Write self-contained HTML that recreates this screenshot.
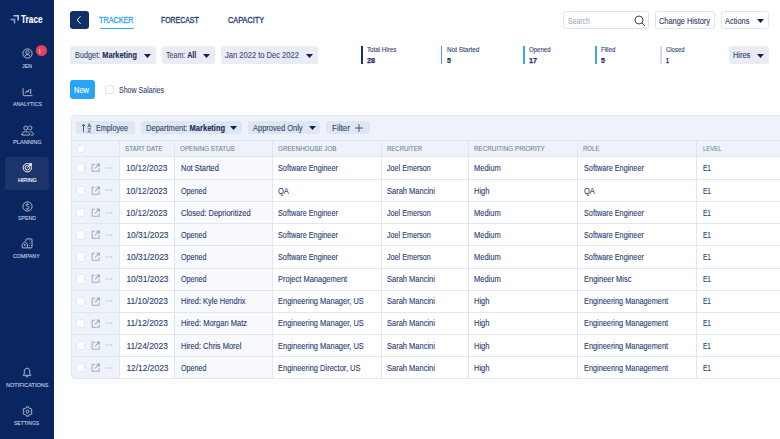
<!DOCTYPE html><html><head><meta charset="utf-8"><style>*{box-sizing:border-box;margin:0;padding:0}
html,body{width:780px;height:439px;overflow:hidden;background:#fff}
body{position:relative;font-family:"Liberation Sans",sans-serif}
.a{position:absolute}
.t{position:absolute;white-space:nowrap;line-height:1;transform-origin:0 0;-webkit-text-stroke-width:0.12px}
</style></head><body>
<div class="a" style="left:0;top:0;width:54px;height:439px;background:#0a2660"></div>
<svg class="a" style="left:10px;top:14.5px" width="9" height="9" viewBox="0 0 9 9"><path d="M3.5 0.8H8.2V5.5" fill="none" stroke="#b9c2d6" stroke-width="1.6"/><path d="M0.5 4.5H4.5V8.5" fill="none" stroke="#8f9bb6" stroke-width="1.6"/></svg>
<div class="a" style="left:5px;top:157px;width:44px;height:33px;background:rgba(255,255,255,0.07);border-radius:3px"></div>
<div class="a" style="left:0;width:54px;display:flex;justify-content:center;top:48.2px"><svg width="11" height="11" viewBox="0 0 11 11" fill="none" stroke="#c3cbe0" stroke-width="0.9"><circle cx="5.5" cy="5.5" r="4.6"/><circle cx="5.5" cy="4.4" r="1.7"/><path d="M2.6 8.6C3.3 7.2 4.3 6.7 5.5 6.7S7.7 7.2 8.4 8.6"/></svg></div>
<div class="a" style="left:0;width:54px;display:flex;justify-content:center;top:86.0px"><svg width="11" height="11" viewBox="0 0 11 11" fill="none" stroke="#c3cbe0" stroke-width="0.9" stroke-linecap="round" stroke-linejoin="round"><path d="M1.1 2.6V8.6Q1.1 9.7 2.2 9.7H10"/><path d="M3.6 7L4.8 4.8L5.9 6.1L7.1 3.6"/><path d="M8.7 3.5V7.7"/></svg></div>
<div class="a" style="left:0;width:54px;display:flex;justify-content:center;top:124.5px"><svg width="13" height="11" viewBox="0 0 13 11" fill="none" stroke="#c3cbe0" stroke-width="0.85" stroke-linecap="round" stroke-linejoin="round"><circle cx="4.8" cy="3" r="2"/><path d="M7.9 1.3A2 2 0 1 1 7.9 4.7"/><path d="M0.9 9.6C0.9 7.6 2.4 6.7 4.8 6.7S8.6 7.6 8.6 9.6Q8.6 10.1 8.1 10.1H1.4Q0.9 10.1 0.9 9.6Z"/><path d="M9.8 6.8C11.5 7 12.4 7.9 12.4 9.5Q12.4 10.1 11.8 10.1H10.2"/></svg></div>
<div class="a" style="left:0;width:54px;display:flex;justify-content:center;top:162.4px"><svg width="11" height="11" viewBox="0 0 11 11" fill="none" stroke="#ffffff" stroke-width="1"><circle cx="5.3" cy="5.7" r="4.2"/><circle cx="5.3" cy="5.7" r="2.2"/><path d="M5.3 5.7L9.3 1.7M7.5 1.6H9.4V3.5"/></svg></div>
<div class="a" style="left:0;width:54px;display:flex;justify-content:center;top:200.5px"><svg width="11" height="11" viewBox="0 0 11 11" fill="none" stroke="#c3cbe0" stroke-width="0.9"><circle cx="5.5" cy="5.5" r="4.6"/><path d="M6.8 3.8C6.5 3.3 6 3.1 5.4 3.1C4.6 3.1 4.1 3.6 4.1 4.2C4.1 5.6 7 4.9 7 6.6C7 7.3 6.4 7.9 5.5 7.9C4.8 7.9 4.3 7.6 4 7.1M5.5 2.3V3.1M5.5 7.9V8.7"/></svg></div>
<div class="a" style="left:0;width:54px;display:flex;justify-content:center;top:238.3px"><svg width="12" height="11" viewBox="0 0 12 11" fill="none" stroke="#c3cbe0" stroke-width="0.9"><path d="M1.2 9.3V6.3L3.8 3.6L6.4 6.3V9.3Q6.4 9.9 5.8 9.9H1.8Q1.2 9.9 1.2 9.3Z"/><path d="M5 3.2V1.8Q5 0.9 5.9 0.9H10.1Q11 0.9 11 1.8V9Q11 9.9 10.1 9.9H6.4"/><path d="M8.8 2.6V3.4M8.8 4.9V5.7M8.8 7.2V8"/><circle cx="3.8" cy="6.9" r="0.5" fill="#c3cbe0"/></svg></div>
<div class="a" style="left:0;width:54px;display:flex;justify-content:center;top:367.2px"><svg width="10" height="11" viewBox="0 0 10 11" fill="none" stroke="#c3cbe0" stroke-width="0.9"><path d="M5 1.2C3.2 1.2 2.3 2.6 2.3 4.2V6.8L1.2 8.3H8.8L7.7 6.8V4.2C7.7 2.6 6.8 1.2 5 1.2Z"/><path d="M3.9 9.2C4.1 9.8 4.5 10.1 5 10.1S5.9 9.8 6.1 9.2"/></svg></div>
<div class="a" style="left:0;width:54px;display:flex;justify-content:center;top:405.5px"><svg width="11" height="11" viewBox="0 0 11 11" fill="none" stroke="#c3cbe0" stroke-width="0.85" stroke-linejoin="round"><path d="M4.34 0.84 L6.66 0.84 L6.57 1.75 L8.21 2.69 L8.95 2.17 L10.11 4.18 L9.28 4.56 L9.28 6.44 L10.11 6.82 L8.95 8.83 L8.21 8.31 L6.57 9.25 L6.66 10.16 L4.34 10.16 L4.43 9.25 L2.79 8.31 L2.05 8.83 L0.89 6.82 L1.72 6.44 L1.72 4.56 L0.89 4.18 L2.05 2.17 L2.79 2.69 L4.43 1.75Z"/><circle cx="5.5" cy="5.5" r="1.5"/></svg></div>
<div class="a" style="left:35.5px;top:45px;width:11px;height:11px;border-radius:50%;background:#e8405e"></div>
<div class="a" style="left:70.4px;top:11px;width:18.6px;height:18.3px;background:#11306a;border-radius:3px"></div>
<svg class="a" style="left:75.2px;top:15.2px" width="8" height="10" viewBox="0 0 8 10"><path d="M5.6 1.2L2.2 5L5.6 8.8" fill="none" stroke="#fff" stroke-width="0.9"/></svg>
<div class="a" style="left:99.6px;top:27.6px;width:34.6px;height:1.6px;background:#3ba4f1;border-radius:1px"></div>
<div class="a" style="left:563px;top:11px;width:86.4px;height:18.4px;border:1px solid #dfe5ef;border-radius:3px"></div>
<svg class="a" style="left:634px;top:14.5px" width="12" height="12" viewBox="0 0 12 12" fill="none" stroke="#3a4d77" stroke-width="1"><circle cx="5" cy="5" r="4"/><path d="M8 8L11 11"/></svg>
<div class="a" style="left:655px;top:11px;width:60.4px;height:18.4px;border:1px solid #dfe5ef;border-radius:3px"></div>
<div class="a" style="left:721.4px;top:11px;width:47.2px;height:18.4px;border:1px solid #dfe5ef;border-radius:3px"></div>
<svg class="a" style="left:757px;top:19.4px" width="7" height="4" viewBox="0 0 7 4"><path d="M0 0H7L3.5 4Z" fill="#0d2257"/></svg>
<div class="a" style="left:70.4px;top:46px;width:85.2px;height:17.6px;background:#e9edf3;border-radius:3px"></div>
<div class="a" style="left:161.6px;top:46px;width:53.4px;height:17.6px;background:#e9edf3;border-radius:3px"></div>
<div class="a" style="left:220.6px;top:46px;width:97.4px;height:17.6px;background:#e9edf3;border-radius:3px"></div>
<div class="a" style="left:729px;top:46px;width:40px;height:17.6px;background:#e9edf3;border-radius:3px"></div>
<svg class="a" style="left:143.6px;top:54px" width="7" height="4" viewBox="0 0 7 4"><path d="M0 0H7L3.5 4Z" fill="#0d2257"/></svg>
<svg class="a" style="left:203px;top:54px" width="7" height="4" viewBox="0 0 7 4"><path d="M0 0H7L3.5 4Z" fill="#0d2257"/></svg>
<svg class="a" style="left:305.6px;top:54px" width="7" height="4" viewBox="0 0 7 4"><path d="M0 0H7L3.5 4Z" fill="#0d2257"/></svg>
<svg class="a" style="left:757px;top:53.6px" width="7" height="4" viewBox="0 0 7 4"><path d="M0 0H7L3.5 4Z" fill="#0d2257"/></svg>
<div class="a" style="left:361.20000000000005px;top:45.5px;width:1.9px;height:18.3px;background:#1b2f63"></div>
<div class="a" style="left:440.6px;top:45.5px;width:1.9px;height:18.3px;background:#3aa6f3"></div>
<div class="a" style="left:523.0px;top:45.5px;width:1.9px;height:18.3px;background:#3aa6f3"></div>
<div class="a" style="left:595.2px;top:45.5px;width:1.9px;height:18.3px;background:#3aa6f3"></div>
<div class="a" style="left:660.0px;top:45.5px;width:1.9px;height:18.3px;background:#d3dcea"></div>
<div class="a" style="left:70.4px;top:80px;width:24.2px;height:18.6px;background:#29a3f6;border-radius:3px"></div>
<div class="a" style="left:105px;top:85px;width:9.4px;height:9.2px;border:1px solid #dfe5ef;border-radius:2px"></div>
<div class="a" style="left:70.5px;top:115px;width:729.5px;height:264.4px;border:1px solid #dee5ef;border-radius:4px;background:#fff"></div>
<div class="a" style="left:71.5px;top:116px;width:729.5px;height:40.400000000000006px;background:#edf2fb;border-top-left-radius:3px"></div>
<div class="a" style="left:71.5px;top:156.4px;width:48.0px;height:221.99999999999997px;background:#edf2fb;border-bottom-left-radius:3px"></div>
<div class="a" style="left:174.5px;top:156.4px;width:98.0px;height:221.99999999999997px;background:#f7f9fc"></div>
<div class="a" style="left:76px;top:120.6px;width:58.6px;height:13.4px;background:#dfe6f1;border-radius:3px"></div>
<div class="a" style="left:140.6px;top:120.6px;width:101.4px;height:13.4px;background:#dfe6f1;border-radius:3px"></div>
<div class="a" style="left:248px;top:120.6px;width:72.4px;height:13.4px;background:#dfe6f1;border-radius:3px"></div>
<div class="a" style="left:326px;top:120.6px;width:43.5px;height:13.4px;background:#dfe6f1;border-radius:3px"></div>
<svg class="a" style="left:80.5px;top:121.5px" width="11" height="11" viewBox="0 0 11 11" fill="none" stroke="#34476f" stroke-width="0.85"><path d="M2.5 10.1V2.4M0.8 4.3L2.5 2.3L4.2 4.3"/><path d="M6.6 5.4L8.25 1.7L9.9 5.4M7.2 4.2H9.3" stroke-width="0.75"/><path d="M6.7 6.8H9.8L6.7 9.9H9.9" stroke-width="0.75"/></svg>
<svg class="a" style="left:230.4px;top:126px" width="7" height="4" viewBox="0 0 7 4"><path d="M0 0H7L3.5 4Z" fill="#0d2257"/></svg>
<svg class="a" style="left:309px;top:126px" width="7" height="4" viewBox="0 0 7 4"><path d="M0 0H7L3.5 4Z" fill="#0d2257"/></svg>
<svg class="a" style="left:354px;top:122.5px" width="10" height="10" viewBox="0 0 10 10" fill="none" stroke="#33466f" stroke-width="0.9"><path d="M5 1V9M1 5H9"/></svg>
<div class="a" style="left:70.5px;top:139.6px;width:729.5px;height:1px;background:#e0e7f1"></div>
<div class="a" style="left:119.0px;top:139.6px;width:1px;height:238.79999999999998px;background:#e0e7f1"></div>
<div class="a" style="left:174.0px;top:139.6px;width:1px;height:238.79999999999998px;background:#e0e7f1"></div>
<div class="a" style="left:272.0px;top:139.6px;width:1px;height:238.79999999999998px;background:#e0e7f1"></div>
<div class="a" style="left:380.5px;top:139.6px;width:1px;height:238.79999999999998px;background:#e0e7f1"></div>
<div class="a" style="left:468.1px;top:139.6px;width:1px;height:238.79999999999998px;background:#e0e7f1"></div>
<div class="a" style="left:576.9px;top:139.6px;width:1px;height:238.79999999999998px;background:#e0e7f1"></div>
<div class="a" style="left:696.1px;top:139.6px;width:1px;height:238.79999999999998px;background:#e0e7f1"></div>
<div class="a" style="left:70.5px;top:156.1px;width:729.5px;height:1px;background:#e0e7f1"></div>
<div class="a" style="left:70.5px;top:179.0px;width:729.5px;height:1px;background:#e0e7f1"></div>
<div class="a" style="left:70.5px;top:201.15px;width:729.5px;height:1px;background:#e0e7f1"></div>
<div class="a" style="left:70.5px;top:223.3px;width:729.5px;height:1px;background:#e0e7f1"></div>
<div class="a" style="left:70.5px;top:245.45px;width:729.5px;height:1px;background:#e0e7f1"></div>
<div class="a" style="left:70.5px;top:267.59999999999997px;width:729.5px;height:1px;background:#e0e7f1"></div>
<div class="a" style="left:70.5px;top:289.75px;width:729.5px;height:1px;background:#e0e7f1"></div>
<div class="a" style="left:70.5px;top:311.9px;width:729.5px;height:1px;background:#e0e7f1"></div>
<div class="a" style="left:70.5px;top:334.05px;width:729.5px;height:1px;background:#e0e7f1"></div>
<div class="a" style="left:70.5px;top:356.2px;width:729.5px;height:1px;background:#e0e7f1"></div>
<div class="a" style="left:76.6px;top:144.6px;width:8.8px;height:8.6px;border:1px solid #e1e7f0;border-radius:2.5px;background:#fff"></div>
<div class="a" style="left:76.3px;top:163.25000000000003px;width:9.2px;height:9.5px;border:1px solid #e1e7f0;border-radius:2.5px;background:#fff"></div>
<svg class="a" style="left:91px;top:163.35000000000002px" width="9.5" height="9.5" viewBox="0 0 9.5 9.5" fill="none" stroke="#a3aec3" stroke-width="1.1"><path d="M4 1.3H1.2V8.2H8.1V5.3"/><path d="M4 5.4L8.2 1.2M5.6 1.1H8.4V3.9"/></svg>
<svg class="a" style="left:105px;top:166.85000000000002px" width="8" height="2" viewBox="0 0 8 2" fill="#a9b4c8"><circle cx="1.3" cy="1" r="0.65"/><circle cx="4" cy="1" r="0.65"/><circle cx="6.7" cy="1" r="0.65"/></svg>
<div class="a" style="left:76.3px;top:185.775px;width:9.2px;height:9.5px;border:1px solid #e1e7f0;border-radius:2.5px;background:#fff"></div>
<svg class="a" style="left:91px;top:185.875px" width="9.5" height="9.5" viewBox="0 0 9.5 9.5" fill="none" stroke="#a3aec3" stroke-width="1.1"><path d="M4 1.3H1.2V8.2H8.1V5.3"/><path d="M4 5.4L8.2 1.2M5.6 1.1H8.4V3.9"/></svg>
<svg class="a" style="left:105px;top:189.375px" width="8" height="2" viewBox="0 0 8 2" fill="#a9b4c8"><circle cx="1.3" cy="1" r="0.65"/><circle cx="4" cy="1" r="0.65"/><circle cx="6.7" cy="1" r="0.65"/></svg>
<div class="a" style="left:76.3px;top:207.92500000000004px;width:9.2px;height:9.5px;border:1px solid #e1e7f0;border-radius:2.5px;background:#fff"></div>
<svg class="a" style="left:91px;top:208.02500000000003px" width="9.5" height="9.5" viewBox="0 0 9.5 9.5" fill="none" stroke="#a3aec3" stroke-width="1.1"><path d="M4 1.3H1.2V8.2H8.1V5.3"/><path d="M4 5.4L8.2 1.2M5.6 1.1H8.4V3.9"/></svg>
<svg class="a" style="left:105px;top:211.52500000000003px" width="8" height="2" viewBox="0 0 8 2" fill="#a9b4c8"><circle cx="1.3" cy="1" r="0.65"/><circle cx="4" cy="1" r="0.65"/><circle cx="6.7" cy="1" r="0.65"/></svg>
<div class="a" style="left:76.3px;top:230.07500000000002px;width:9.2px;height:9.5px;border:1px solid #e1e7f0;border-radius:2.5px;background:#fff"></div>
<svg class="a" style="left:91px;top:230.175px" width="9.5" height="9.5" viewBox="0 0 9.5 9.5" fill="none" stroke="#a3aec3" stroke-width="1.1"><path d="M4 1.3H1.2V8.2H8.1V5.3"/><path d="M4 5.4L8.2 1.2M5.6 1.1H8.4V3.9"/></svg>
<svg class="a" style="left:105px;top:233.675px" width="8" height="2" viewBox="0 0 8 2" fill="#a9b4c8"><circle cx="1.3" cy="1" r="0.65"/><circle cx="4" cy="1" r="0.65"/><circle cx="6.7" cy="1" r="0.65"/></svg>
<div class="a" style="left:76.3px;top:252.225px;width:9.2px;height:9.5px;border:1px solid #e1e7f0;border-radius:2.5px;background:#fff"></div>
<svg class="a" style="left:91px;top:252.325px" width="9.5" height="9.5" viewBox="0 0 9.5 9.5" fill="none" stroke="#a3aec3" stroke-width="1.1"><path d="M4 1.3H1.2V8.2H8.1V5.3"/><path d="M4 5.4L8.2 1.2M5.6 1.1H8.4V3.9"/></svg>
<svg class="a" style="left:105px;top:255.825px" width="8" height="2" viewBox="0 0 8 2" fill="#a9b4c8"><circle cx="1.3" cy="1" r="0.65"/><circle cx="4" cy="1" r="0.65"/><circle cx="6.7" cy="1" r="0.65"/></svg>
<div class="a" style="left:76.3px;top:274.375px;width:9.2px;height:9.5px;border:1px solid #e1e7f0;border-radius:2.5px;background:#fff"></div>
<svg class="a" style="left:91px;top:274.475px" width="9.5" height="9.5" viewBox="0 0 9.5 9.5" fill="none" stroke="#a3aec3" stroke-width="1.1"><path d="M4 1.3H1.2V8.2H8.1V5.3"/><path d="M4 5.4L8.2 1.2M5.6 1.1H8.4V3.9"/></svg>
<svg class="a" style="left:105px;top:277.975px" width="8" height="2" viewBox="0 0 8 2" fill="#a9b4c8"><circle cx="1.3" cy="1" r="0.65"/><circle cx="4" cy="1" r="0.65"/><circle cx="6.7" cy="1" r="0.65"/></svg>
<div class="a" style="left:76.3px;top:296.525px;width:9.2px;height:9.5px;border:1px solid #e1e7f0;border-radius:2.5px;background:#fff"></div>
<svg class="a" style="left:91px;top:296.625px" width="9.5" height="9.5" viewBox="0 0 9.5 9.5" fill="none" stroke="#a3aec3" stroke-width="1.1"><path d="M4 1.3H1.2V8.2H8.1V5.3"/><path d="M4 5.4L8.2 1.2M5.6 1.1H8.4V3.9"/></svg>
<svg class="a" style="left:105px;top:300.125px" width="8" height="2" viewBox="0 0 8 2" fill="#a9b4c8"><circle cx="1.3" cy="1" r="0.65"/><circle cx="4" cy="1" r="0.65"/><circle cx="6.7" cy="1" r="0.65"/></svg>
<div class="a" style="left:76.3px;top:318.67499999999995px;width:9.2px;height:9.5px;border:1px solid #e1e7f0;border-radius:2.5px;background:#fff"></div>
<svg class="a" style="left:91px;top:318.775px" width="9.5" height="9.5" viewBox="0 0 9.5 9.5" fill="none" stroke="#a3aec3" stroke-width="1.1"><path d="M4 1.3H1.2V8.2H8.1V5.3"/><path d="M4 5.4L8.2 1.2M5.6 1.1H8.4V3.9"/></svg>
<svg class="a" style="left:105px;top:322.275px" width="8" height="2" viewBox="0 0 8 2" fill="#a9b4c8"><circle cx="1.3" cy="1" r="0.65"/><circle cx="4" cy="1" r="0.65"/><circle cx="6.7" cy="1" r="0.65"/></svg>
<div class="a" style="left:76.3px;top:340.825px;width:9.2px;height:9.5px;border:1px solid #e1e7f0;border-radius:2.5px;background:#fff"></div>
<svg class="a" style="left:91px;top:340.925px" width="9.5" height="9.5" viewBox="0 0 9.5 9.5" fill="none" stroke="#a3aec3" stroke-width="1.1"><path d="M4 1.3H1.2V8.2H8.1V5.3"/><path d="M4 5.4L8.2 1.2M5.6 1.1H8.4V3.9"/></svg>
<svg class="a" style="left:105px;top:344.425px" width="8" height="2" viewBox="0 0 8 2" fill="#a9b4c8"><circle cx="1.3" cy="1" r="0.65"/><circle cx="4" cy="1" r="0.65"/><circle cx="6.7" cy="1" r="0.65"/></svg>
<div class="a" style="left:76.3px;top:362.97499999999997px;width:9.2px;height:9.5px;border:1px solid #e1e7f0;border-radius:2.5px;background:#fff"></div>
<svg class="a" style="left:91px;top:363.075px" width="9.5" height="9.5" viewBox="0 0 9.5 9.5" fill="none" stroke="#a3aec3" stroke-width="1.1"><path d="M4 1.3H1.2V8.2H8.1V5.3"/><path d="M4 5.4L8.2 1.2M5.6 1.1H8.4V3.9"/></svg>
<svg class="a" style="left:105px;top:366.575px" width="8" height="2" viewBox="0 0 8 2" fill="#a9b4c8"><circle cx="1.3" cy="1" r="0.65"/><circle cx="4" cy="1" r="0.65"/><circle cx="6.7" cy="1" r="0.65"/></svg>
<div class="t" style="left:20.87px;top:14.45px;font-size:11.05px;transform:scaleX(0.753);font-weight:700;color:#fff">Trace</div>
<div class="t" style="left:22.00px;top:64.38px;font-size:5.81px;transform:scaleX(0.909);color:#c3cbe0;-webkit-text-stroke-width:0.12px">JEN</div>
<div class="t" style="left:12.94px;top:102.28px;font-size:5.81px;transform:scaleX(0.910);color:#c3cbe0;-webkit-text-stroke-width:0.12px">ANALYTICS</div>
<div class="t" style="left:12.96px;top:140.08px;font-size:5.81px;transform:scaleX(0.970);color:#c3cbe0;-webkit-text-stroke-width:0.12px">PLANNING</div>
<div class="t" style="left:17.54px;top:178.08px;font-size:5.81px;transform:scaleX(0.925);color:#ffffff;-webkit-text-stroke-width:0.12px">HIRING</div>
<div class="t" style="left:18.00px;top:216.08px;font-size:5.81px;transform:scaleX(0.900);color:#c3cbe0;-webkit-text-stroke-width:0.12px">SPEND</div>
<div class="t" style="left:13.19px;top:254.08px;font-size:5.81px;transform:scaleX(0.925);color:#c3cbe0;-webkit-text-stroke-width:0.12px">COMPANY</div>
<div class="t" style="left:5.77px;top:383.08px;font-size:5.81px;transform:scaleX(0.960);color:#c3cbe0;-webkit-text-stroke-width:0.12px">NOTIFICATIONS</div>
<div class="t" style="left:13.77px;top:420.98px;font-size:5.81px;transform:scaleX(0.869);color:#c3cbe0;-webkit-text-stroke-width:0.12px">SETTINGS</div>
<div class="t" style="left:39.38px;top:47.63px;font-size:6.10px;transform:scaleX(0.444);font-weight:700;color:#fff">1</div>
<div class="t" style="left:99.29px;top:15.62px;font-size:8.72px;transform:scaleX(0.829);color:#3ba4f1;-webkit-text-stroke:0.35px #3ba4f1">TRACKER</div>
<div class="t" style="left:161.27px;top:15.62px;font-size:8.72px;transform:scaleX(0.792);color:#2d416e;-webkit-text-stroke:0.35px #2d416e">FORECAST</div>
<div class="t" style="left:228.00px;top:15.62px;font-size:8.72px;transform:scaleX(0.842);color:#2d416e;-webkit-text-stroke:0.35px #2d416e">CAPACITY</div>
<div class="t" style="left:567.54px;top:18.31px;font-size:8.14px;transform:scaleX(0.846);color:#a9b4c8">Search</div>
<div class="t" style="left:659.32px;top:17.26px;font-size:8.43px;transform:scaleX(0.878);color:#2d416e">Change History</div>
<div class="t" style="left:725.32px;top:17.26px;font-size:8.43px;transform:scaleX(0.884);color:#2d416e">Actions</div>
<div class="t" style="left:75.00px;top:52.09px;font-size:8.28px;transform:scaleX(0.886);color:#3d4f77">Budget: <b style="color:#1b2d5a">Marketing</b></div>
<div class="t" style="left:166.00px;top:52.09px;font-size:8.28px;transform:scaleX(0.856);color:#3d4f77">Team: <b style="color:#1b2d5a">All</b></div>
<div class="t" style="left:225.00px;top:52.09px;font-size:8.28px;transform:scaleX(0.914);color:#3d4f77">Jan 2022 to Dec 2022</div>
<div class="t" style="left:733.00px;top:52.09px;font-size:8.28px;transform:scaleX(0.890);color:#2d416e">Hires</div>
<div class="t" style="left:367.00px;top:47.32px;font-size:6.83px;transform:scaleX(0.909);color:#33466f">Total Hires</div>
<div class="t" style="left:367.00px;top:57.33px;font-size:7.99px;transform:scaleX(0.913);font-weight:700;color:#1d2f5c;-webkit-text-stroke-width:0.25px">28</div>
<div class="t" style="left:446.57px;top:47.32px;font-size:6.83px;transform:scaleX(0.939);color:#33466f">Not Started</div>
<div class="t" style="left:446.52px;top:57.33px;font-size:7.99px;transform:scaleX(0.882);font-weight:700;color:#1d2f5c;-webkit-text-stroke-width:0.25px">5</div>
<div class="t" style="left:529.10px;top:47.32px;font-size:6.83px;transform:scaleX(0.886);color:#33466f">Opened</div>
<div class="t" style="left:529.23px;top:57.33px;font-size:7.99px;transform:scaleX(0.913);font-weight:700;color:#1d2f5c;-webkit-text-stroke-width:0.25px">17</div>
<div class="t" style="left:601.00px;top:47.32px;font-size:6.83px;transform:scaleX(0.882);color:#33466f">Filled</div>
<div class="t" style="left:601.00px;top:57.33px;font-size:7.99px;transform:scaleX(0.882);font-weight:700;color:#1d2f5c;-webkit-text-stroke-width:0.25px">5</div>
<div class="t" style="left:666.09px;top:47.32px;font-size:6.83px;transform:scaleX(0.872);color:#33466f">Closed</div>
<div class="t" style="left:666.29px;top:57.33px;font-size:7.99px;transform:scaleX(0.648);font-weight:700;color:#1d2f5c;-webkit-text-stroke-width:0.25px">1</div>
<div class="t" style="left:74.36px;top:86.71px;font-size:8.14px;transform:scaleX(0.918);color:#fff">New</div>
<div class="t" style="left:119.00px;top:85.66px;font-size:8.43px;transform:scaleX(0.837);color:#3a4c74">Show Salaries</div>
<div class="t" style="left:96.30px;top:124.24px;font-size:8.58px;transform:scaleX(0.841);color:#33466f">Employee</div>
<div class="t" style="left:146.00px;top:124.24px;font-size:8.58px;transform:scaleX(0.878);color:#33466f">Department: <b style="color:#1b2d5a">Marketing</b></div>
<div class="t" style="left:253.00px;top:124.24px;font-size:8.58px;transform:scaleX(0.874);color:#33466f">Approved Only</div>
<div class="t" style="left:332.00px;top:124.24px;font-size:8.58px;transform:scaleX(0.947);color:#33466f">Filter</div>
<div class="t" style="left:125.00px;top:144.80px;font-size:7.56px;transform:scaleX(0.826);color:#6f7d9b;-webkit-text-stroke-width:0.08px">START DATE</div>
<div class="t" style="left:180.00px;top:144.80px;font-size:7.56px;transform:scaleX(0.836);color:#6f7d9b;-webkit-text-stroke-width:0.08px">OPENING STATUS</div>
<div class="t" style="left:278.00px;top:144.80px;font-size:7.56px;transform:scaleX(0.831);color:#6f7d9b;-webkit-text-stroke-width:0.08px">GREENHOUSE JOB</div>
<div class="t" style="left:387.00px;top:144.80px;font-size:7.56px;transform:scaleX(0.795);color:#6f7d9b;-webkit-text-stroke-width:0.08px">RECRUITER</div>
<div class="t" style="left:474.00px;top:144.80px;font-size:7.56px;transform:scaleX(0.835);color:#6f7d9b;-webkit-text-stroke-width:0.08px">RECRUITING PRIORITY</div>
<div class="t" style="left:583.00px;top:144.80px;font-size:7.56px;transform:scaleX(0.800);color:#6f7d9b;-webkit-text-stroke-width:0.08px">ROLE</div>
<div class="t" style="left:703.00px;top:144.80px;font-size:7.56px;transform:scaleX(0.784);color:#6f7d9b;-webkit-text-stroke-width:0.08px">LEVEL</div>
<div class="t" style="left:126.40px;top:164.06px;font-size:8.43px;transform:scaleX(0.981);color:#2a4274">10/12/2023</div>
<div class="t" style="left:180.60px;top:164.06px;font-size:8.43px;transform:scaleX(0.890);color:#2a4274">Not Started</div>
<div class="t" style="left:278.01px;top:164.06px;font-size:8.43px;transform:scaleX(0.864);color:#2a4274">Software Engineer</div>
<div class="t" style="left:387.00px;top:164.06px;font-size:8.43px;transform:scaleX(0.851);color:#2a4274">Joel Emerson</div>
<div class="t" style="left:474.00px;top:164.06px;font-size:8.43px;transform:scaleX(0.890);color:#2a4274">Medium</div>
<div class="t" style="left:584.00px;top:164.06px;font-size:8.43px;transform:scaleX(0.864);color:#2a4274">Software Engineer</div>
<div class="t" style="left:703.41px;top:164.06px;font-size:8.43px;transform:scaleX(0.775);color:#2a4274">E1</div>
<div class="t" style="left:126.40px;top:187.21px;font-size:8.43px;transform:scaleX(0.981);color:#2a4274">10/12/2023</div>
<div class="t" style="left:180.61px;top:187.21px;font-size:8.43px;transform:scaleX(0.851);color:#2a4274">Opened</div>
<div class="t" style="left:278.00px;top:187.21px;font-size:8.43px;transform:scaleX(0.890);color:#2a4274">QA</div>
<div class="t" style="left:387.00px;top:187.21px;font-size:8.43px;transform:scaleX(0.890);color:#2a4274">Sarah Mancini</div>
<div class="t" style="left:474.00px;top:187.21px;font-size:8.43px;transform:scaleX(0.890);color:#2a4274">High</div>
<div class="t" style="left:584.00px;top:187.21px;font-size:8.43px;transform:scaleX(0.890);color:#2a4274">QA</div>
<div class="t" style="left:703.41px;top:187.21px;font-size:8.43px;transform:scaleX(0.775);color:#2a4274">E1</div>
<div class="t" style="left:126.40px;top:209.36px;font-size:8.43px;transform:scaleX(0.981);color:#2a4274">10/12/2023</div>
<div class="t" style="left:180.60px;top:209.36px;font-size:8.43px;transform:scaleX(0.890);color:#2a4274">Closed: Deprioritized</div>
<div class="t" style="left:278.01px;top:209.36px;font-size:8.43px;transform:scaleX(0.864);color:#2a4274">Software Engineer</div>
<div class="t" style="left:387.00px;top:209.36px;font-size:8.43px;transform:scaleX(0.851);color:#2a4274">Joel Emerson</div>
<div class="t" style="left:474.00px;top:209.36px;font-size:8.43px;transform:scaleX(0.890);color:#2a4274">Medium</div>
<div class="t" style="left:584.00px;top:209.36px;font-size:8.43px;transform:scaleX(0.864);color:#2a4274">Software Engineer</div>
<div class="t" style="left:703.41px;top:209.36px;font-size:8.43px;transform:scaleX(0.775);color:#2a4274">E1</div>
<div class="t" style="left:126.40px;top:230.51px;font-size:8.43px;color:#2a4274">10/31/2023</div>
<div class="t" style="left:180.61px;top:230.51px;font-size:8.43px;transform:scaleX(0.851);color:#2a4274">Opened</div>
<div class="t" style="left:278.01px;top:230.51px;font-size:8.43px;transform:scaleX(0.864);color:#2a4274">Software Engineer</div>
<div class="t" style="left:387.00px;top:230.51px;font-size:8.43px;transform:scaleX(0.851);color:#2a4274">Joel Emerson</div>
<div class="t" style="left:474.00px;top:230.51px;font-size:8.43px;transform:scaleX(0.890);color:#2a4274">Medium</div>
<div class="t" style="left:584.00px;top:230.51px;font-size:8.43px;transform:scaleX(0.864);color:#2a4274">Software Engineer</div>
<div class="t" style="left:703.41px;top:230.51px;font-size:8.43px;transform:scaleX(0.775);color:#2a4274">E1</div>
<div class="t" style="left:126.40px;top:252.66px;font-size:8.43px;color:#2a4274">10/31/2023</div>
<div class="t" style="left:180.61px;top:252.66px;font-size:8.43px;transform:scaleX(0.851);color:#2a4274">Opened</div>
<div class="t" style="left:278.01px;top:252.66px;font-size:8.43px;transform:scaleX(0.864);color:#2a4274">Software Engineer</div>
<div class="t" style="left:387.00px;top:252.66px;font-size:8.43px;transform:scaleX(0.851);color:#2a4274">Joel Emerson</div>
<div class="t" style="left:474.00px;top:252.66px;font-size:8.43px;transform:scaleX(0.890);color:#2a4274">Medium</div>
<div class="t" style="left:584.00px;top:252.66px;font-size:8.43px;transform:scaleX(0.864);color:#2a4274">Software Engineer</div>
<div class="t" style="left:703.41px;top:252.66px;font-size:8.43px;transform:scaleX(0.775);color:#2a4274">E1</div>
<div class="t" style="left:126.40px;top:274.81px;font-size:8.43px;color:#2a4274">10/31/2023</div>
<div class="t" style="left:180.61px;top:274.81px;font-size:8.43px;transform:scaleX(0.851);color:#2a4274">Opened</div>
<div class="t" style="left:278.00px;top:274.81px;font-size:8.43px;transform:scaleX(0.890);color:#2a4274">Project Management</div>
<div class="t" style="left:387.00px;top:274.81px;font-size:8.43px;transform:scaleX(0.890);color:#2a4274">Sarah Mancini</div>
<div class="t" style="left:474.00px;top:274.81px;font-size:8.43px;transform:scaleX(0.890);color:#2a4274">Medium</div>
<div class="t" style="left:584.00px;top:274.81px;font-size:8.43px;transform:scaleX(0.890);color:#2a4274">Engineer Misc</div>
<div class="t" style="left:703.41px;top:274.81px;font-size:8.43px;transform:scaleX(0.775);color:#2a4274">E1</div>
<div class="t" style="left:126.40px;top:296.96px;font-size:8.43px;color:#2a4274">11/10/2023</div>
<div class="t" style="left:180.60px;top:296.96px;font-size:8.43px;transform:scaleX(0.890);color:#2a4274">Hired: Kyle Hendrix</div>
<div class="t" style="left:278.00px;top:296.96px;font-size:8.43px;transform:scaleX(0.890);color:#2a4274">Engineering Manager, US</div>
<div class="t" style="left:387.00px;top:296.96px;font-size:8.43px;transform:scaleX(0.890);color:#2a4274">Sarah Mancini</div>
<div class="t" style="left:474.00px;top:296.96px;font-size:8.43px;transform:scaleX(0.890);color:#2a4274">High</div>
<div class="t" style="left:584.00px;top:296.96px;font-size:8.43px;transform:scaleX(0.871);color:#2a4274">Engineering Management</div>
<div class="t" style="left:703.41px;top:296.96px;font-size:8.43px;transform:scaleX(0.775);color:#2a4274">E1</div>
<div class="t" style="left:126.40px;top:319.11px;font-size:8.43px;color:#2a4274">11/12/2023</div>
<div class="t" style="left:180.60px;top:319.11px;font-size:8.43px;transform:scaleX(0.893);color:#2a4274">Hired: Morgan Matz</div>
<div class="t" style="left:278.00px;top:319.11px;font-size:8.43px;transform:scaleX(0.890);color:#2a4274">Engineering Manager, US</div>
<div class="t" style="left:387.00px;top:319.11px;font-size:8.43px;transform:scaleX(0.890);color:#2a4274">Sarah Mancini</div>
<div class="t" style="left:474.00px;top:319.11px;font-size:8.43px;transform:scaleX(0.890);color:#2a4274">High</div>
<div class="t" style="left:584.00px;top:319.11px;font-size:8.43px;transform:scaleX(0.871);color:#2a4274">Engineering Management</div>
<div class="t" style="left:703.41px;top:319.11px;font-size:8.43px;transform:scaleX(0.775);color:#2a4274">E1</div>
<div class="t" style="left:126.40px;top:342.26px;font-size:8.43px;color:#2a4274">11/24/2023</div>
<div class="t" style="left:180.60px;top:342.26px;font-size:8.43px;transform:scaleX(0.890);color:#2a4274">Hired: Chris Morel</div>
<div class="t" style="left:278.00px;top:342.26px;font-size:8.43px;transform:scaleX(0.890);color:#2a4274">Engineering Manager, US</div>
<div class="t" style="left:387.00px;top:342.26px;font-size:8.43px;transform:scaleX(0.890);color:#2a4274">Sarah Mancini</div>
<div class="t" style="left:474.00px;top:342.26px;font-size:8.43px;transform:scaleX(0.890);color:#2a4274">High</div>
<div class="t" style="left:584.00px;top:342.26px;font-size:8.43px;transform:scaleX(0.871);color:#2a4274">Engineering Management</div>
<div class="t" style="left:703.41px;top:342.26px;font-size:8.43px;transform:scaleX(0.775);color:#2a4274">E1</div>
<div class="t" style="left:126.40px;top:364.41px;font-size:8.43px;color:#2a4274">12/12/2023</div>
<div class="t" style="left:180.61px;top:364.41px;font-size:8.43px;transform:scaleX(0.851);color:#2a4274">Opened</div>
<div class="t" style="left:278.00px;top:364.41px;font-size:8.43px;transform:scaleX(0.890);color:#2a4274">Engineering Director, US</div>
<div class="t" style="left:387.00px;top:364.41px;font-size:8.43px;transform:scaleX(0.890);color:#2a4274">Sarah Mancini</div>
<div class="t" style="left:474.00px;top:364.41px;font-size:8.43px;transform:scaleX(0.890);color:#2a4274">High</div>
<div class="t" style="left:584.00px;top:364.41px;font-size:8.43px;transform:scaleX(0.871);color:#2a4274">Engineering Management</div>
<div class="t" style="left:703.41px;top:364.41px;font-size:8.43px;transform:scaleX(0.775);color:#2a4274">E1</div>
</body></html>
